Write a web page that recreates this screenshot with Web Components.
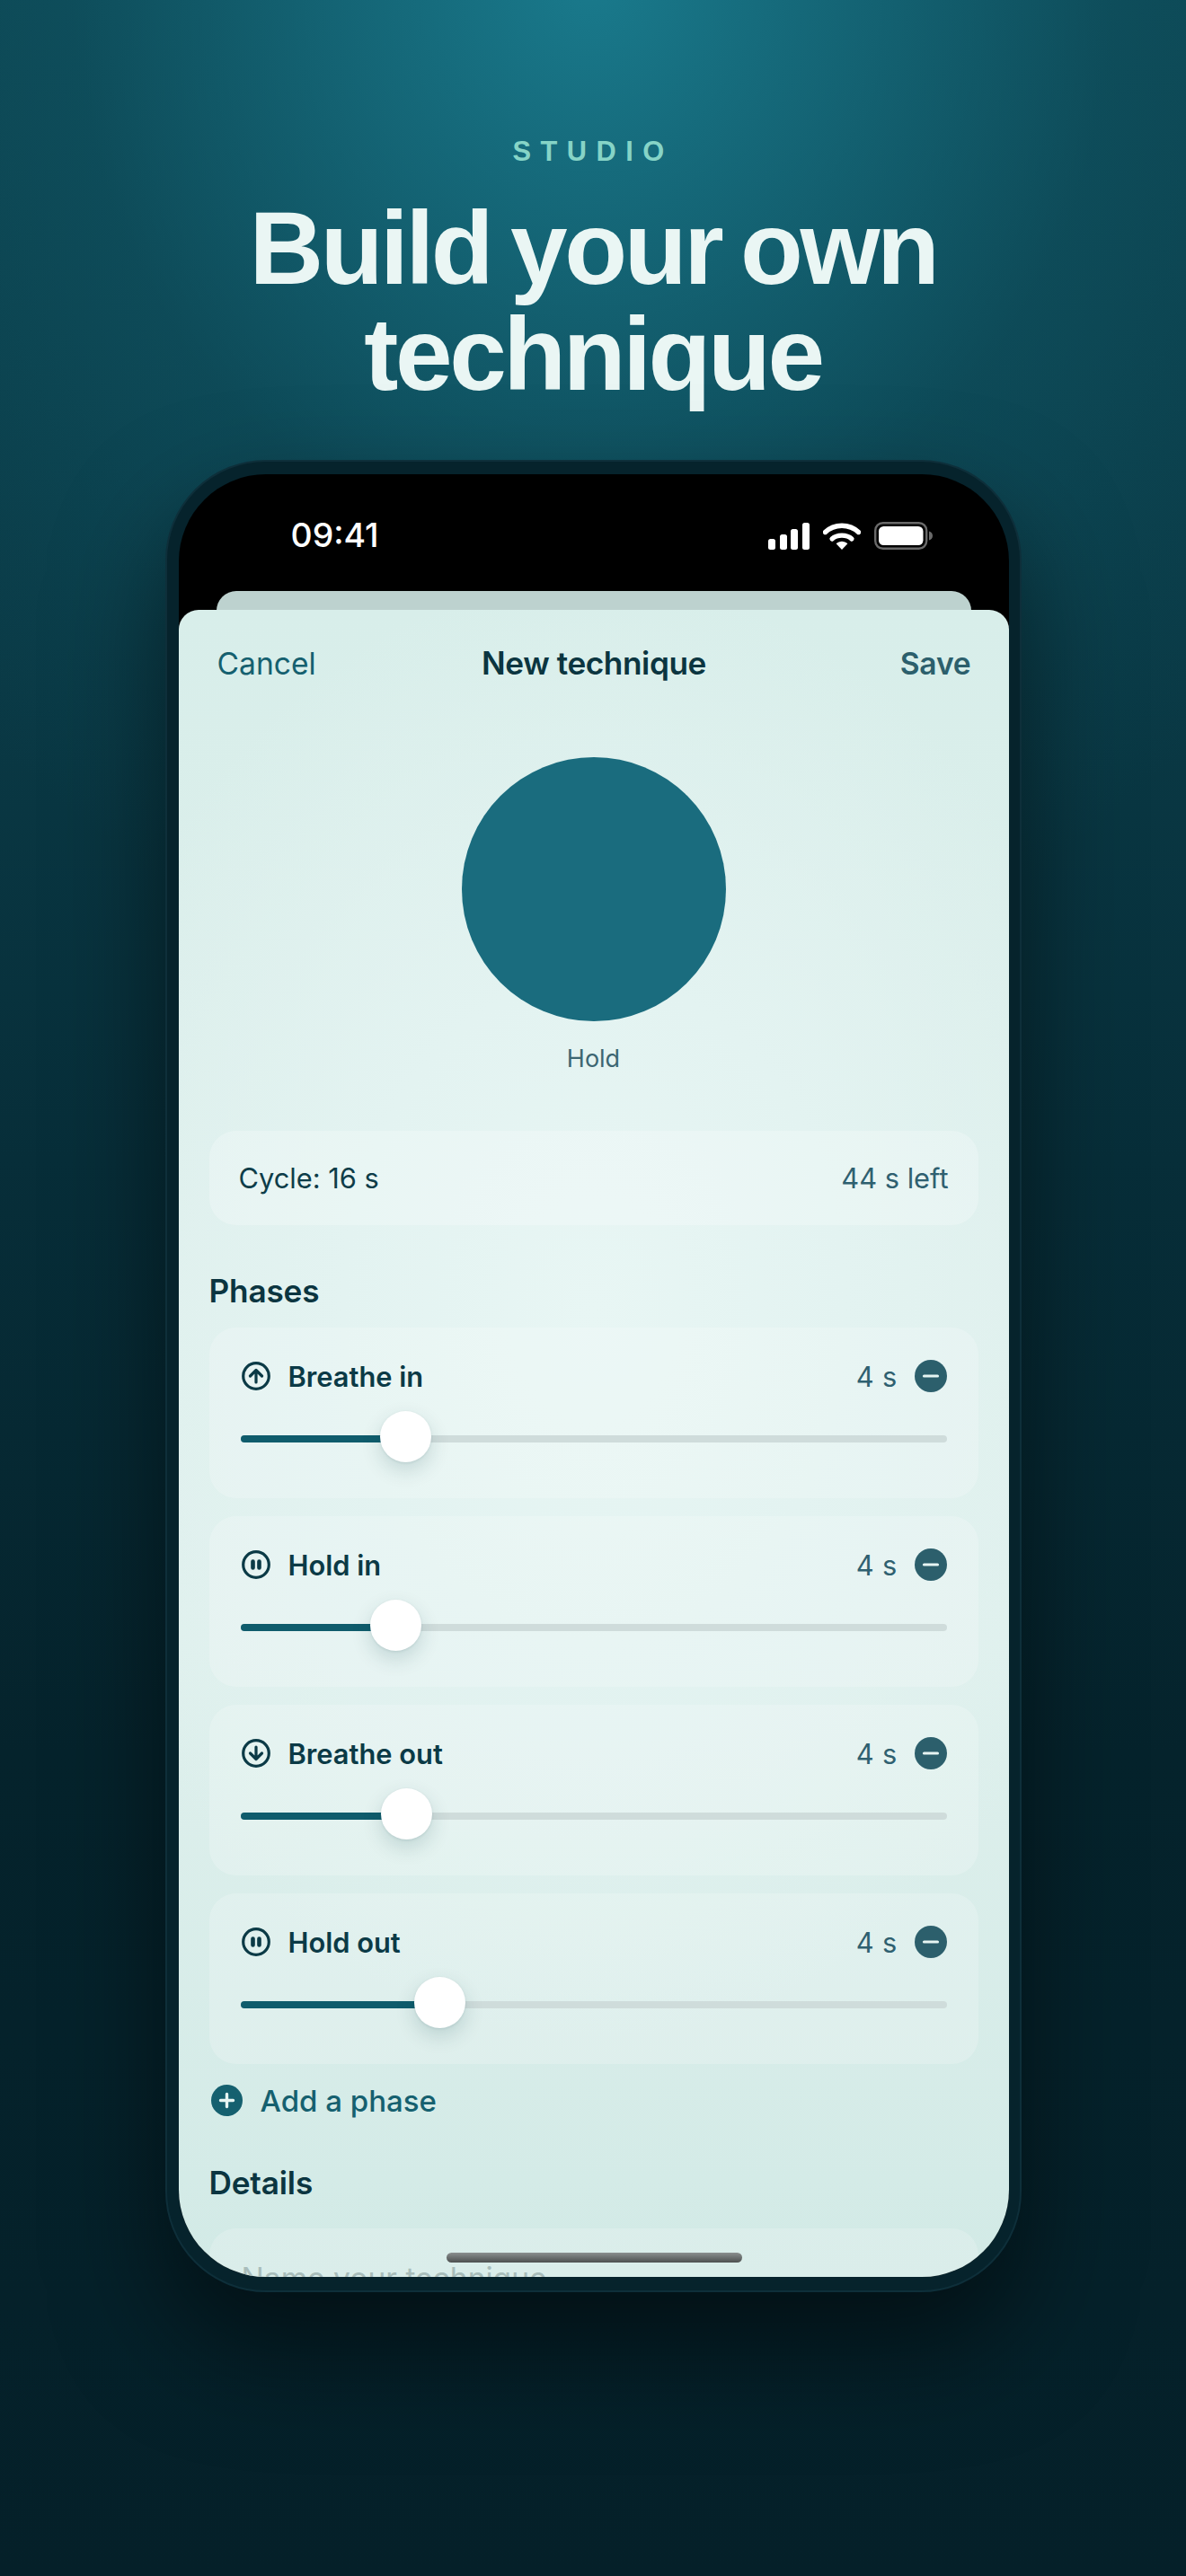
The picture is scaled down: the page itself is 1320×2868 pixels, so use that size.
<!DOCTYPE html>
<html lang="en"><head><meta charset="utf-8"><title>Studio</title>
<style>
html,body{margin:0;padding:0;width:1320px;height:2868px;overflow:hidden;background:#05202a}
</style></head><body>
<studio-page>
  <span slot="eyebrow">STUDIO</span>
  <span slot="title">Build your own<br>technique</span>
  <phone-frame>
    <status-bar slot="status"></status-bar>
    <editor-sheet>
      <sheet-nav></sheet-nav>
      <breath-orb>Hold</breath-orb>
      <cycle-card><span>Cycle: 16 s</span><span slot="right">44 s left</span></cycle-card>
      <section-title style="margin-top:50px">Phases</section-title>
      <phase-list>
        <phase-card label="Breathe in" icon="up" pos="23.4"></phase-card>
        <phase-card label="Hold in" icon="pause" pos="22"></phase-card>
        <phase-card label="Breathe out" icon="down" pos="23.5"></phase-card>
        <phase-card label="Hold out" icon="pause" pos="28.3"></phase-card>
      </phase-list>
      <add-phase>Add a phase</add-phase>
      <section-title style="margin-top:52px">Details</section-title>
      <name-card>Name your technique</name-card>
    </editor-sheet>
  </phone-frame>
</studio-page>
<script>
const F='font-family:Inter,"Liberation Sans",sans-serif;';
const H='font-family:"Liberation Sans",Arial,sans-serif;';
function def(name,html,init){
  customElements.define(name,class extends HTMLElement{
    constructor(){super();this.attachShadow({mode:'open'}).innerHTML=html;}
    connectedCallback(){if(init)init(this);}
  });
}
def('studio-page',`<style>
:host{display:flex;flex-direction:column;align-items:center;width:1320px;height:2868px;box-sizing:border-box;padding-top:150px;overflow:hidden;${H}
background:
 radial-gradient(ellipse 1000px 1150px at 660px -30px,rgba(27,128,147,.9) 0%,rgba(23,112,130,.74) 28%,rgba(17,90,106,.42) 58%,rgba(16,86,102,.12) 85%,rgba(16,86,102,0) 100%),
 linear-gradient(180deg,#0c4450 0%,#0a3a46 25%,#072e39 45%,#05232c 68%,#052029 100%);}
.eyebrow{font-size:30.8px;line-height:38px;font-weight:700;letter-spacing:.34em;color:#86d4c7;}
h1{margin:29px 0 0;font-size:114.4px;line-height:118px;font-weight:700;letter-spacing:-.03em;word-spacing:-6.5px;color:#eaf6f4;text-align:center;}
.phone{margin-top:59px}
</style>
<div class="eyebrow"><slot name="eyebrow"></slot></div>
<h1><slot name="title"></slot></h1>
<div class="phone"><slot></slot></div>`);
def('phone-frame',`<style>
:host{display:block;width:953px;height:1040px;}
.body{width:953px;height:2040px;box-sizing:border-box;padding:14px 13px;border:2px solid #0e2f3a;border-radius:112px;background:#06232c;box-shadow:0 60px 120px rgba(0,0,0,.5);}
.screen{display:flex;flex-direction:column;width:924px;height:2007px;border-radius:97px;overflow:hidden;background:#000;position:relative;}
.peek{flex:none;height:30px;margin:0 42px -9px;border-radius:22px 22px 0 0;background:#bdd2cf;}
.home{position:absolute;left:298px;bottom:16px;width:329px;height:11px;border-radius:6px;background:linear-gradient(180deg,#8a8f8f,#4d5050);z-index:2}
</style>
<div class="body"><div class="screen">
<slot name="status"></slot>
<div class="peek"></div>
<slot></slot>
<div class="home"></div>
</div></div>`);
def('status-bar',`<style>
:host{display:flex;flex:none;align-items:flex-start;justify-content:space-between;height:130px;box-sizing:border-box;padding:45px 85px 0 125px;color:#fff;${F}}
.t{font-size:37.4px;line-height:46px;font-weight:500;letter-spacing:0;}
.i{display:flex;align-items:center;gap:15px;padding-top:8px}
svg{display:block}
</style>
<div class="t">09:41</div>
<div class="i">
<svg width="46" height="30" viewBox="0 0 46 30" fill="#fff"><rect x="0" y="18" width="8" height="12" rx="2.5"/><rect x="13" y="13" width="8" height="17" rx="2.5"/><rect x="25" y="7" width="8" height="23" rx="2.5"/><rect x="38" y="0" width="8" height="30" rx="2.5"/></svg>
<svg width="42" height="30" viewBox="0 0 42 30" fill="none"><path d="M2.5 10.5C12.5 .8 29.5 .8 39.5 10.5" stroke="#fff" stroke-width="5.4" stroke-linecap="round"/><path d="M10 18C15.5 12.8 26.5 12.8 32 18" stroke="#fff" stroke-width="5.2" stroke-linecap="round"/><path d="M14.6 23.2C18.2 19.8 23.8 19.8 27.4 23.2L21 30Z" fill="#fff"/></svg>
<svg width="65" height="31" viewBox="0 0 65 31" fill="none"><rect x="1.2" y="1.2" width="57" height="28.6" rx="8.5" stroke="#6a6a6a" stroke-width="2.4"/><rect x="5" y="5" width="49.5" height="21" rx="5.5" fill="#fff"/><path d="M61 10.5C63.5 11 65 13 65 15.5S63.5 20 61 20.5Z" fill="#6a6a6a"/></svg>
</div>`);
def('editor-sheet',`<style>
:host{display:block;flex:1;min-height:0;overflow:hidden;box-sizing:border-box;padding:0 34px;border-radius:22px 22px 0 0;position:relative;z-index:1;
background:radial-gradient(ellipse 620px 820px at 50% 42%,#e8f6f4 0%,#e3f3f1 45%,rgba(227,243,241,0) 100%),linear-gradient(180deg,#d8eeea 0%,#deefec 40%,#dff0ed 62%,#d2eae6 100%);}
</style><slot></slot>`);
def('sheet-nav',`<style>
:host{display:grid;grid-template-columns:1fr auto 1fr;align-items:center;height:118px;margin:0 8px 0 9px;${F}font-size:33.6px;}
.c{color:#15606f;font-weight:400}
.m{color:#0b3540;font-weight:600;font-size:35.2px;letter-spacing:-.012em}
.s{color:#2c5f6c;font-weight:600;text-align:right;letter-spacing:-.005em}
</style><span class="c">Cancel</span><span class="m">New technique</span><span class="s">Save</span>`);
def('breath-orb',`<style>
:host{display:flex;flex-direction:column;align-items:center;margin-top:46px;${F}font-size:27px;line-height:36px;color:#3c6672;}
.o{width:294px;height:294px;border-radius:50%;background:#1a6c7e;margin-bottom:24px}
</style><div class="o"></div><slot></slot>`);
def('cycle-card',`<style>
:host{display:flex;align-items:center;justify-content:space-between;height:105px;margin-top:62px;box-sizing:border-box;padding:0 33px;border-radius:30px;background:rgba(255,255,255,.24);${F}font-size:30.8px;color:#0e3d49;}
.r{color:#2f6070}
</style><slot></slot><span class="r"><slot name="right"></slot></span>`);
def('section-title',`<style>
:host{display:block;${F}font-size:35.2px;line-height:46px;font-weight:600;letter-spacing:-.005em;color:#0b3540;}
</style><slot></slot>`);
def('phase-list',`<style>
:host{display:flex;flex-direction:column;gap:20px;margin-top:18px;}
</style><slot></slot>`);
const ICONS={
 up:'<path d="M16 23V9.5M9.5 16 16 9.5 22.5 16" />',
 down:'<path d="M16 9v13.5M9.5 16 16 22.5 22.5 16" />',
 pause:'<path d="M12.5 12.5v7M19.5 12.5v7" stroke-width="4.6"/>'
};
def('phase-card',`<style>
:host{display:block;height:190px;box-sizing:border-box;padding:35px 35px 0;border-radius:30px;background:rgba(255,255,255,.2);${F}}
.row{display:flex;align-items:center;height:38px;}
svg.ic{flex:none;width:32px;height:32px;margin:0 20px 0 1px;}
.l{font-size:30.8px;font-weight:600;color:#0b3a46;flex:1}
.v{font-size:30.8px;color:#2f6070;margin-right:19px;letter-spacing:.01em}
.track{position:relative;height:8px;margin-top:47px;border-radius:4px;background:#cfdcdb;}
.fill{height:8px;border-radius:4px;background:#0f5c6c;}
.thumb{position:absolute;top:-27px;width:57px;height:57px;margin-left:-28.5px;border-radius:50%;background:#fff;box-shadow:0 9px 22px rgba(0,60,70,.16),0 1px 3px rgba(0,60,70,.1);}
</style>
<div class="row"><svg class="ic" viewBox="0 0 32 32" fill="none" stroke="#0b3a46" stroke-width="3.2" stroke-linecap="round" stroke-linejoin="round"><circle cx="16" cy="16" r="14.3"/><g class="g"></g></svg><span class="l"></span><span class="v">4 s</span>
<svg width="36" height="36" viewBox="0 0 36 36"><circle cx="18" cy="18" r="18" fill="#2c5f6c"/><path d="M10.5 18h15" stroke="#e6f4f2" stroke-width="3.2" stroke-linecap="round"/></svg></div>
<div class="track"><div class="fill"></div><div class="thumb"></div></div>`,
el=>{const s=el.shadowRoot;s.querySelector('.l').textContent=el.getAttribute('label');
 s.querySelector('.g').innerHTML=ICONS[el.getAttribute('icon')];
 const p=el.getAttribute('pos')+'%';s.querySelector('.fill').style.width=p;s.querySelector('.thumb').style.left=p;});
def('add-phase',`<style>
:host{display:flex;align-items:center;gap:20px;height:33px;margin:24px 0 0 2px;${F}font-size:33px;font-weight:550;color:#15606f;}
svg{flex:none}
</style><svg width="35" height="35" viewBox="0 0 35 35"><circle cx="17.5" cy="17.5" r="17.5" fill="#15606f"/><path d="M17.5 10.5v14M10.5 17.5h14" stroke="#e6f4f2" stroke-width="3.4" stroke-linecap="round"/></svg><span><slot></slot></span>`);
def('name-card',`<style>
:host{display:block;height:130px;margin-top:28px;box-sizing:border-box;padding:34px 36px;border-radius:30px;background:rgba(255,255,255,.18);${F}font-size:33.6px;line-height:44px;color:#a9bdbb;}
</style><slot></slot>`);
</script>
</body></html>
